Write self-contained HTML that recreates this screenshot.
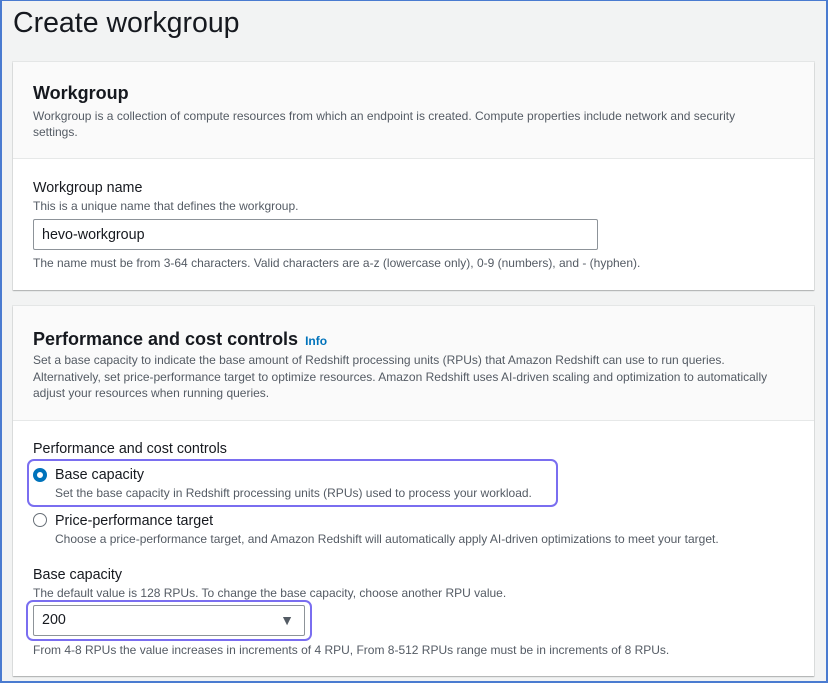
<!DOCTYPE html>
<html><head><meta charset="utf-8"><style>
*{margin:0;padding:0;box-sizing:border-box}
body{width:828px;height:683px;overflow:hidden;background:#f2f3f3;font-family:"Liberation Sans",sans-serif;color:#16191f;position:relative}
.frame{position:absolute;left:0;top:0;width:828px;height:683px;border:2px solid #4a7bd0;border-top:1px solid #4a7bd0;pointer-events:none;z-index:10}
.a{position:absolute;white-space:nowrap}
.card{position:absolute;left:13px;width:801px;background:#fff;box-shadow:0 1px 1px rgba(0,0,0,.25),0 0 0 1px #e4e6e6}
.hd{position:absolute;left:0;top:0;width:100%;background:#fafafa;border-bottom:1px solid #e6e8e8}
.h{font-size:18px;font-weight:bold}
.d{font-size:12px;color:#545b64}
.l{font-size:14.3px}
.in{position:absolute;border:1px solid #8d9399;border-radius:2px;background:#fff;font-size:14.3px;padding-left:8px;line-height:31px}
.hl{position:absolute;border:2px solid #7a6ef0;border-radius:7px}
</style></head><body>
<div class="frame"></div>
<div class="a" style="left:13px;top:7px;font-size:28.5px">Create workgroup</div>

<div class="card" style="top:62px;height:228px">
 <div class="hd" style="height:97px"></div>
 <div class="a h" style="left:20px;top:21px">Workgroup</div>
 <div class="a d" style="left:20px;top:46px;line-height:16px">Workgroup is a collection of compute resources from which an endpoint is created. Compute properties include network and security<br>settings.</div>
 <div class="a l" style="left:20px;top:118px">Workgroup name</div>
 <div class="a d" style="left:20px;top:137px">This is a unique name that defines the workgroup.</div>
 <div class="in" style="left:20px;top:157px;width:565px;height:31px">hevo-workgroup</div>
 <div class="a d" style="left:20px;top:194px">The name must be from 3-64 characters. Valid characters are a-z (lowercase only), 0-9 (numbers), and - (hyphen).</div>
</div>

<div class="card" style="top:306px;height:370px">
 <div class="hd" style="height:115px"></div>
 <div class="a h" style="left:20px;top:23px">Performance and cost controls <span style="font-size:12px;color:#0073bb;margin-left:2px">Info</span></div>
 <div class="a d" style="left:20px;top:46px;line-height:16.5px">Set a base capacity to indicate the base amount of Redshift processing units (RPUs) that Amazon Redshift can use to run queries.<br>Alternatively, set price-performance target to optimize resources. Amazon Redshift uses AI-driven scaling and optimization to automatically<br>adjust your resources when running queries.</div>
 <div class="a l" style="left:20px;top:135px">Performance and cost controls</div>
 <div class="hl" style="left:14px;top:153px;width:531px;height:48px"></div>
 <div class="a" style="left:20px;top:162px;width:14px;height:14px;border-radius:50%;border:4px solid #0073bb;background:#fff"></div>
 <div class="a l" style="left:42px;top:161px">Base capacity</div>
 <div class="a d" style="left:42px;top:180px">Set the base capacity in Redshift processing units (RPUs) used to process your workload.</div>
 <div class="a" style="left:20px;top:207px;width:14px;height:14px;border-radius:50%;border:1.5px solid #687078;background:#fff"></div>
 <div class="a l" style="left:42px;top:207px">Price-performance target</div>
 <div class="a d" style="left:42px;top:226px">Choose a price-performance target, and Amazon Redshift will automatically apply AI-driven optimizations to meet your target.</div>
 <div class="a l" style="left:20px;top:261px">Base capacity</div>
 <div class="a d" style="left:20px;top:280px">The default value is 128 RPUs. To change the base capacity, choose another RPU value.</div>
 <div class="hl" style="left:13px;top:294px;width:286px;height:41px"></div>
 <div class="in" style="left:20px;top:299px;width:272px;height:31px;line-height:29px">200<span style="position:absolute;right:10px;top:0;font-size:14px;color:#545b64">▼</span></div>
 <div class="a d" style="left:20px;top:337px">From 4-8 RPUs the value increases in increments of 4 RPU, From 8-512 RPUs range must be in increments of 8 RPUs.</div>
</div>
</body></html>
